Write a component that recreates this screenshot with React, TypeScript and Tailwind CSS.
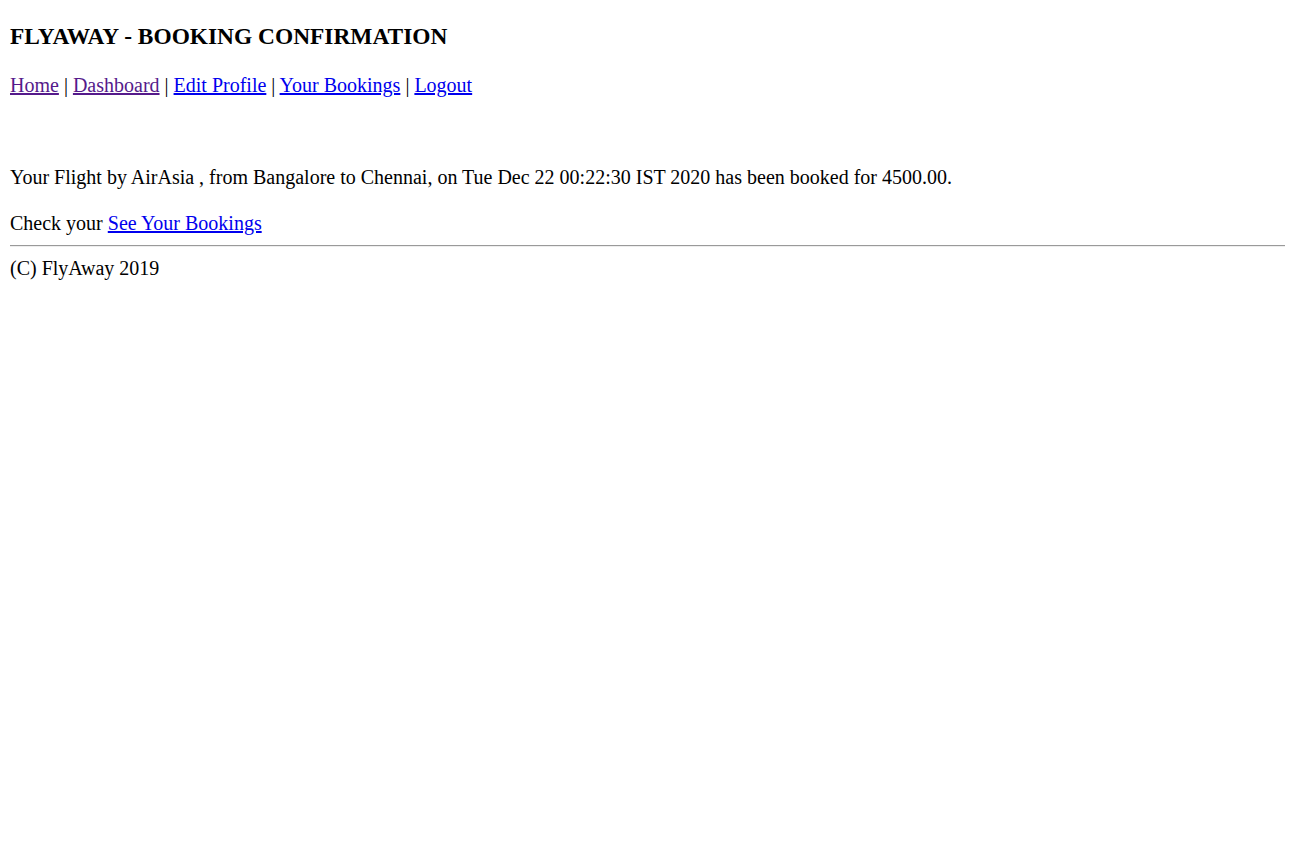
import React from 'react'

const navLinks = [
    { label: 'Home', visited: true },
    { label: 'Dashboard', visited: true },
    { label: 'Edit Profile', visited: false },
    { label: 'Your Bookings', visited: false },
    { label: 'Logout', visited: false },
]

const App: React.FC = () => {
    return (
        <div className="min-h-screen bg-white px-[10px] font-['Liberation_Serif','Times_New_Roman',serif] text-[20px] leading-[23px] text-black">
            <h3 className="pt-[23.4px] text-[23.4px] font-bold leading-[27px]">FLYAWAY - BOOKING CONFIRMATION</h3>

            {/* Nav */}
            <div className="mt-[23.4px]">
                {navLinks.map((link, idx) => (
                    <React.Fragment key={link.label}>
                        {idx > 0 && ' | '}
                        <a href="#" className={`underline ${link.visited ? 'text-[#551a8b]' : 'text-[#0000ee]'}`}>
                            {link.label}
                        </a>
                    </React.Fragment>
                ))}
            </div>

            <div className="mt-[69px]">
                Your Flight by AirAsia , from Bangalore to Chennai, on Tue Dec 22 00:22:30 IST 2020 has been booked for 4500.00.
            </div>
            <div className="mt-[23px]">
                Check your{' '}
                <a href="#" className="text-[#0000ee] underline">See Your Bookings</a>
            </div>

            <hr className="my-[10px] h-0 border-0 border-t border-b border-t-[#9a9a9a] border-b-[#eeeeee]" />

            <div>(C) FlyAway 2019</div>
        </div>
    )
}

export default App
